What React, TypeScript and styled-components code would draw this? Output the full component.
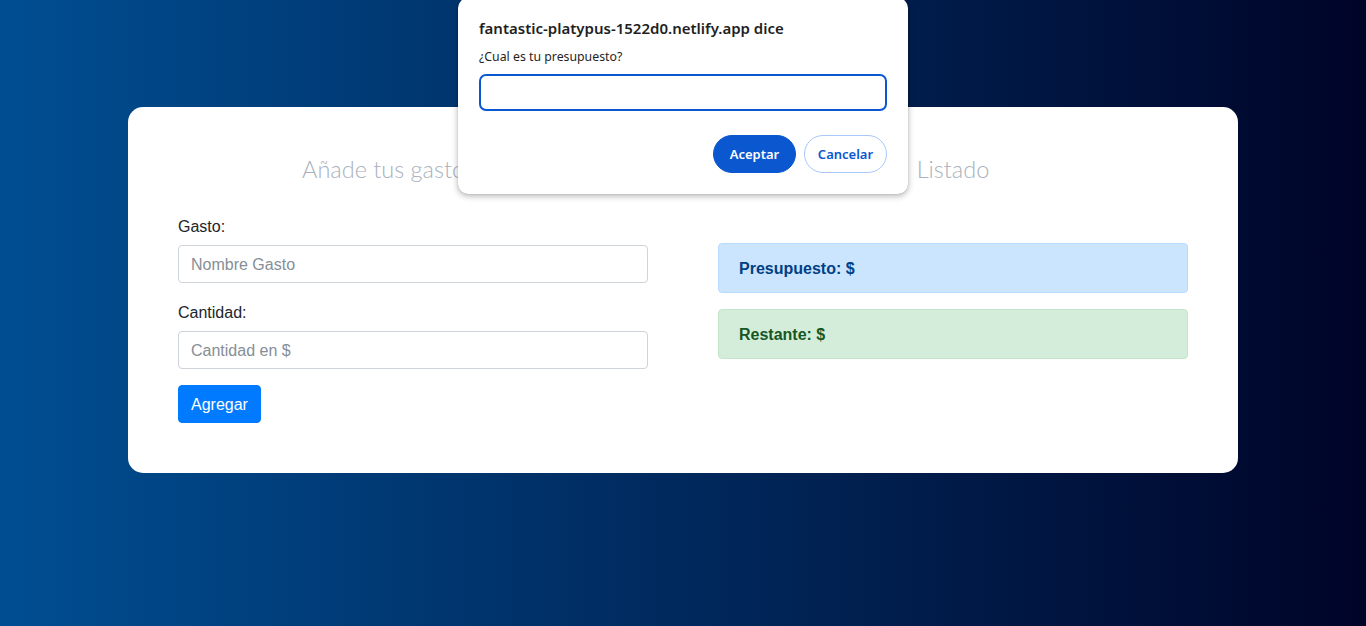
import React from "react";
import styled, { createGlobalStyle } from "styled-components";

const GlobalStyle = createGlobalStyle`
  html, body { margin: 0; padding: 0; }
  body {
    min-height: 626px;
    background: linear-gradient(to right, #004e92, #000428);
    font-family: "Liberation Sans", Arial, sans-serif;
    color: #212529;
  }
  * { box-sizing: border-box; }
`;

const Page = styled.div`
  min-height: 626px;
  padding-top: 107px;
  position: relative;
`;

const Card = styled.main`
  width: 1110px;
  margin: 0 auto;
  background: #fff;
  border-radius: 15px;
  padding: 47px 50px 50px;
`;

const Columns = styled.div`
  display: grid;
  grid-template-columns: 470px 470px;
  column-gap: 70px;
`;

const Column = styled.section``;

const Heading = styled.h2`
  margin: 0 0 29px;
  text-align: center;
  font-family: "Lato", sans-serif;
  font-weight: 300;
  font-size: 23.5px;
  line-height: 30px;
  color: #a9b1bc;
`;

const Field = styled.div`
  margin-bottom: 16px;
`;

const Label = styled.label`
  display: block;
  font-size: 16px;
  line-height: 24px;
  padding-top: 2px;
  margin-bottom: 6px;
  color: #212529;
`;

const Input = styled.input`
  display: block;
  width: 100%;
  height: 38px;
  padding: 7px 12px 5px;
  font-family: inherit;
  font-size: 16px;
  border: 1px solid #ced4da;
  border-radius: 4px;
  color: #495057;
  &::placeholder { color: #868e96; }
`;

const PrimaryButton = styled.button`
  height: 38px;
  padding: 7px 12px 5px;
  font-family: inherit;
  font-size: 16px;
  color: #fff;
  background: #007bff;
  border: 1px solid #007bff;
  border-radius: 4px;
`;

const AlertStack = styled.div`
  padding-top: 30px;
  display: flex;
  flex-direction: column;
  gap: 16px;
`;

const Alert = styled.div<{ $variant: "info" | "success" }>`
  height: 50px;
  padding: 13px 20px 11px;
  border-radius: 4px;
  font-weight: 700;
  font-size: 16px;
  line-height: 24px;
  background: ${(p) => (p.$variant === "info" ? "#cce5ff" : "#d4edda")};
  border: 1px solid ${(p) => (p.$variant === "info" ? "#b8daff" : "#c3e6cb")};
  color: ${(p) => (p.$variant === "info" ? "#004085" : "#155724")};
`;

const Dialog = styled.div`
  position: absolute;
  top: -2px;
  left: 50%;
  transform: translateX(-50%);
  width: 450px;
  height: 196px;
  background: #fff;
  border-radius: 10px;
  box-shadow: 0 2px 6px rgba(0, 0, 0, 0.3), 0 0 1px rgba(0, 0, 0, 0.3);
  padding: 20px 21px 0;
  font-family: "Noto Sans", "Open Sans", sans-serif;
`;

const DialogTitle = styled.div`
  font-size: 15px;
  font-weight: 600;
  color: #1f1f1f;
  line-height: 20px;
`;

const DialogMessage = styled.div`
  margin-top: 10px;
  font-size: 12.3px;
  line-height: 18px;
  color: #1f1f1f;
`;

const DialogInput = styled.input`
  display: block;
  margin-top: 8px;
  width: 408px;
  height: 37px;
  border: 2px solid #0b57d0;
  border-radius: 7px;
  outline: none;
  padding: 0 10px;
  font-size: 13px;
`;

const DialogActions = styled.div`
  margin-top: 24px;
  display: flex;
  justify-content: flex-end;
  gap: 8px;
  width: 408px;
`;

const PillButton = styled.button<{ $primary?: boolean }>`
  width: 83px;
  height: 38px;
  border-radius: 19px;
  font-family: "Noto Sans", "Open Sans", sans-serif;
  font-size: 13px;
  font-weight: 600;
  border: 1px solid ${(p) => (p.$primary ? "#0b57d0" : "#a8c7fa")};
  background: ${(p) => (p.$primary ? "#0b57d0" : "#fff")};
  color: ${(p) => (p.$primary ? "#fff" : "#0b57d0")};
  padding: 0;
`;

export default function App() {
  return (
    <>
      <GlobalStyle />
      <Page>
        <Card>
          <Columns>
            <Column>
              <Heading>Añade tus gastos aquí</Heading>
              <form>
                <Field>
                  <Label>Gasto:</Label>
                  <Input placeholder="Nombre Gasto" />
                </Field>
                <Field>
                  <Label>Cantidad:</Label>
                  <Input placeholder="Cantidad en $" />
                </Field>
                <PrimaryButton type="button">Agregar</PrimaryButton>
              </form>
            </Column>
            <Column>
              <Heading>Listado</Heading>
              <AlertStack>
                <Alert $variant="info">Presupuesto: $</Alert>
                <Alert $variant="success">Restante: $</Alert>
              </AlertStack>
            </Column>
          </Columns>
        </Card>
        <Dialog>
          <DialogTitle>fantastic-platypus-1522d0.netlify.app dice</DialogTitle>
          <DialogMessage>¿Cual es tu presupuesto?</DialogMessage>
          <DialogInput />
          <DialogActions>
            <PillButton $primary>Aceptar</PillButton>
            <PillButton>Cancelar</PillButton>
          </DialogActions>
        </Dialog>
      </Page>
    </>
  );
}
